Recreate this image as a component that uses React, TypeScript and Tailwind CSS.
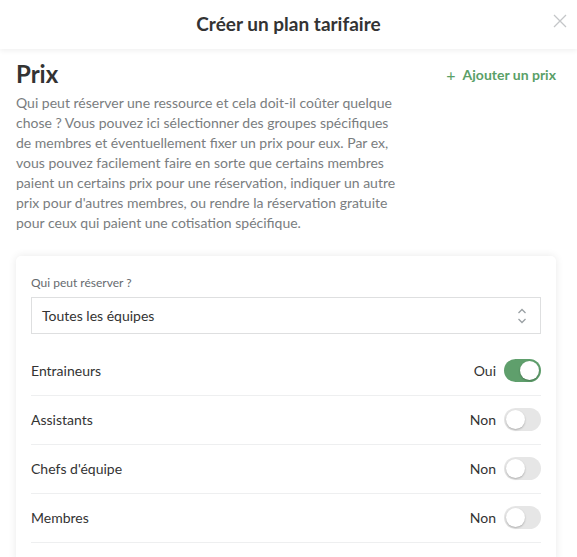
const groups = [
  { name: "Entraineurs", on: true },
  { name: "Assistants", on: false },
  { name: "Chefs d'équipe", on: false },
  { name: "Membres", on: false },
];

function Toggle({ on }: { on: boolean }) {
  return (
    <div
      className={
        "relative h-[23px] w-[37px] rounded-full " +
        (on ? "bg-[#5f9f6c]" : "bg-[#e6e6e6]")
      }
    >
      <div
        className={
          "absolute top-[2px] h-[19px] w-[19px] rounded-full bg-white shadow-[0_1px_2px_rgba(0,0,0,0.25)] " +
          (on ? "left-[16px]" : "left-[2px]")
        }
      />
    </div>
  );
}

export default function App() {
  return (
    <main className="min-h-[557px] bg-white font-['Lato',sans-serif] text-[#333]">
      <header className="relative flex h-[49px] items-center justify-center bg-white shadow-[0_2px_5px_rgba(0,0,0,0.06)]">
        <h1 className="text-[19px] font-bold text-[#333]">Créer un plan tarifaire</h1>
        <button className="absolute right-[10px] top-[14px] text-[#c4c6c8]">
          <svg width="14" height="14" viewBox="0 0 14 14" fill="none" stroke="currentColor" strokeWidth="1.3">
            <path d="M1 1l12 12M13 1L1 13" />
          </svg>
        </button>
      </header>

      <section className="px-4 pt-[12px]">
        <div className="flex items-start justify-between">
          <h2 className="text-[24px] font-bold leading-[26px] text-[#333]">Prix</h2>
          <button className="mr-[5px] mt-[3px] flex items-center gap-[7px] text-[14px] font-bold text-[#5a9f68]">
            <span className="text-[16px] font-normal leading-none">+</span>
            Ajouter un prix
          </button>
        </div>
        <p className="mt-[6px] w-[382px] text-[14px] leading-[20px] text-[#7a7d80]">
          Qui peut réserver une ressource et cela doit-il coûter quelque chose ? Vous pouvez ici
          sélectionner des groupes spécifiques de membres et éventuellement fixer un prix pour eux.
          Par ex, vous pouvez facilement faire en sorte que certains membres paient un certains prix
          pour une réservation, indiquer un autre prix pour d'autres membres, ou rendre la
          réservation gratuite pour ceux qui paient une cotisation spécifique.
        </p>

        <div className="mt-[23px] mr-[5px] rounded-[5px] bg-white px-[15px] pt-[19px] shadow-[0_0_8px_rgba(0,0,0,0.09)]">
          <label className="block text-[12px] leading-[16px] text-[#666a6e]">Qui peut réserver ?</label>
          <div className="mt-[6px] flex h-[37px] items-center justify-between border border-[#dedfe0] pl-[10px] pr-[13px]">
            <span className="text-[14px] text-[#333]">Toutes les équipes</span>
            <svg width="10" height="18" viewBox="0 0 10 18" fill="none" stroke="#9aa0a4" strokeWidth="1.3">
              <path d="M1.5 6l3.5-3.5L8.5 6M1.5 12l3.5 3.5 3.5-3.5" />
            </svg>
          </div>
          <ul className="mt-[13px]">
            {groups.map((g) => (
              <li
                key={g.name}
                className="flex h-[49px] items-center justify-between border-b border-[#eeeff0] pb-[2px]"
              >
                <span className="text-[14px] text-[#333]">{g.name}</span>
                <div className="flex items-center gap-[8px]">
                  <span className="text-[14px] text-[#333]">{g.on ? "Oui" : "Non"}</span>
                  <Toggle on={g.on} />
                </div>
              </li>
            ))}
          </ul>
          <div className="h-[20px]" />
        </div>
      </section>
    </main>
  );
}
